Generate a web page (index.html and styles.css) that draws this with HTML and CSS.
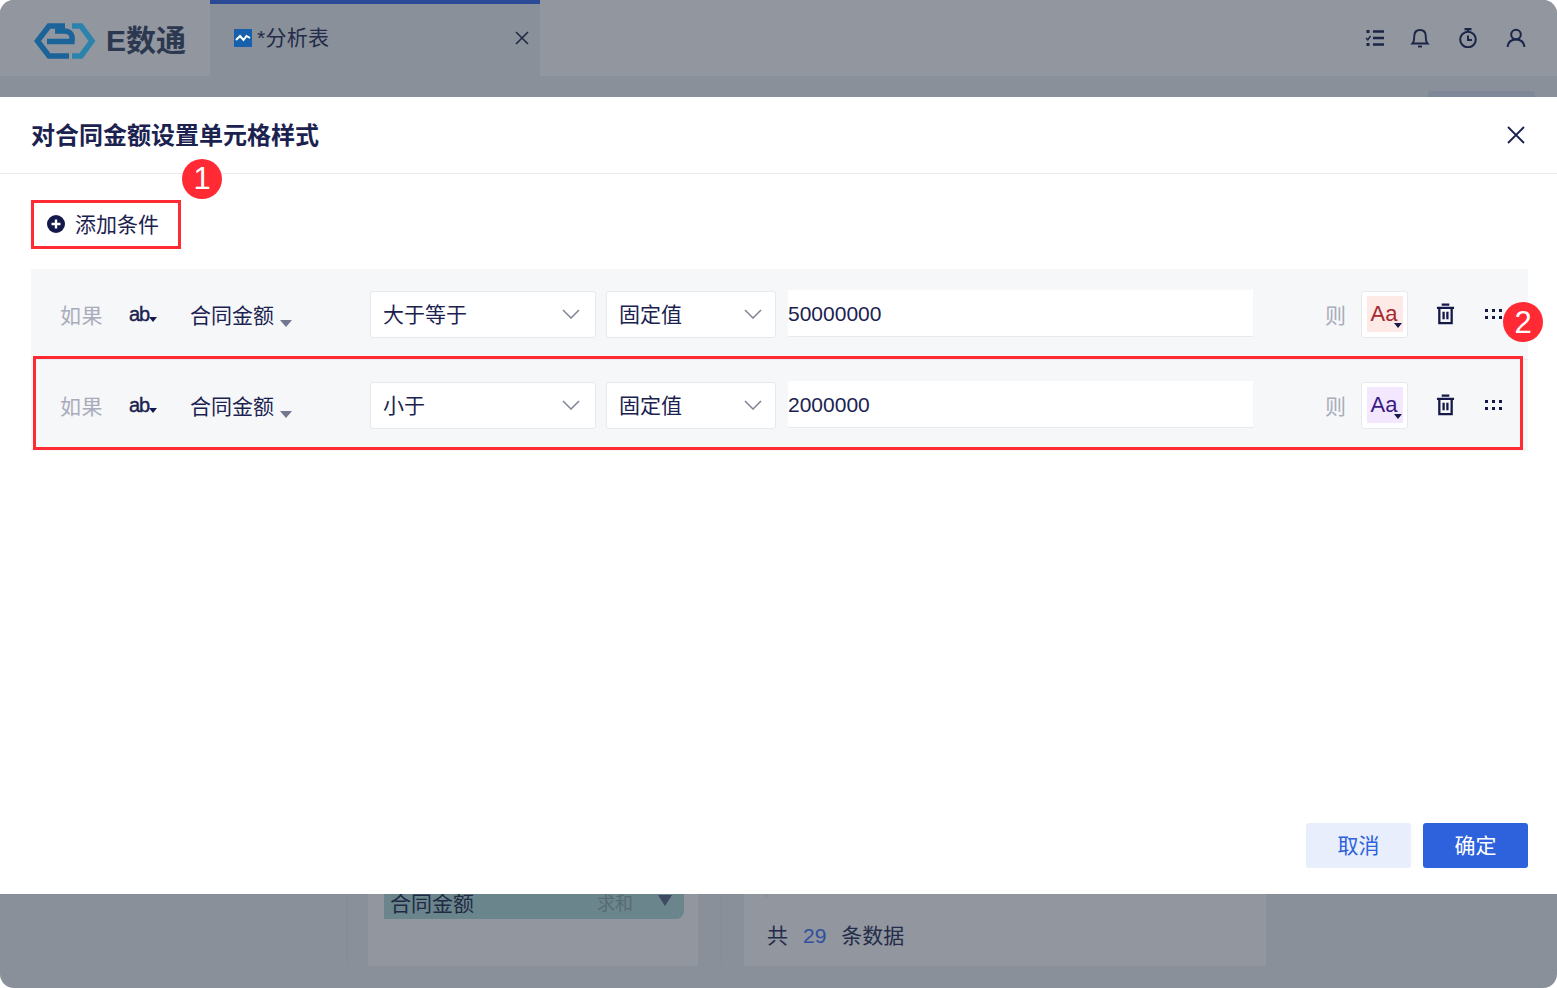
FILE: index.html
```html
<!DOCTYPE html>
<html lang="zh">
<head>
  <meta charset="UTF-8">
  <title>E数通</title>
  <link rel="stylesheet" href="styles.css">
</head>
<body>
<div class="app">

  <header class="topbar">
    <div class="brand">
      <svg class="logo" viewBox="0 0 62 36" fill="none" stroke-width="5.500">
        <path d="M31 3H15L3.500 18 15 33H35" stroke="#1b6499"/>
        <path d="M13 18.500H38C39 10 35 8 30 8H21" stroke="#1b6499"/>
        <path d="M38 3H47L58 18 47 33H38" stroke="#2a83ad"/>
      </svg>
      <span class="brand-name">E数通</span>
    </div>
    <div class="tab">
      <svg class="tab-icon" viewBox="0 0 18 18">
        <rect width="18" height="18" fill="#1660ad"/>
        <path d="M2 11L6 7 9.500 11 12.500 7 16 9" fill="none" stroke="#fff" stroke-width="2"/>
      </svg>
      <span class="tab-title">*分析表</span>
      <svg class="tab-close" viewBox="0 0 14 14"><path d="M1 1L13 13M13 1L1 13" stroke="#1f2a44" stroke-width="1.600"/></svg>
    </div>
    <div class="tools">
      <svg class="tool-list" viewBox="0 0 20 20" fill="none" stroke="#1b2548" stroke-width="2.400">
        <path d="M8 3.500H19M8 10H19M8 16.500H19"/>
        <path d="M1.500 3.500H4.500M1.500 16.500H4.500" stroke-width="2.800"/>
        <path d="M1 10L2.800 11.800 5.500 8" stroke-width="1.400"/>
      </svg>
      <svg viewBox="0 0 20 20" fill="none" stroke="#1b2548" stroke-width="1.900">
        <path d="M2.500 15.500C4 14 4.200 12.500 4.200 8.500C4.200 4.500 6.500 2 10 2S15.800 4.500 15.800 8.500C15.800 12.500 16 14 17.500 15.500Z"/>
        <path d="M8 18.500H12"/>
      </svg>
      <svg viewBox="0 0 20 20" fill="none" stroke="#1b2548" stroke-width="2">
        <circle cx="10" cy="11.500" r="7.800"/>
        <path d="M6.500 1.200H13.500M10 1.200V3.500" stroke-width="2.200"/>
        <path d="M10 7.500V12H14"/>
      </svg>
      <svg viewBox="0 0 20 20" fill="none" stroke="#1b2548" stroke-width="2">
        <circle cx="10" cy="6.500" r="4.800"/>
        <path d="M1.500 19C2 14.500 5 11.500 10 11.500S18 14.500 18.500 19"/>
      </svg>
    </div>
  </header>

  <div class="subbar"><span class="subbar-btn"></span></div>

  <section class="dialog">
    <div class="dialog-head">
      <h2>对合同金额设置单元格样式</h2>
      <svg class="dialog-close" viewBox="0 0 18 18"><path d="M1 1L17 17M17 1L1 17" stroke="#1b2250" stroke-width="1.800"/></svg>
    </div>

    <div class="dialog-body">
      <button class="add-btn">
        <svg viewBox="0 0 18 18">
          <circle cx="9" cy="9" r="9" fill="#14194a"/>
          <path d="M9 4.500V13.500M4.500 9H13.500" stroke="#fff" stroke-width="2.400"/>
        </svg>
        添加条件
      </button>

      <div class="rules">
        <div class="rule">
          <span class="rule-if">如果</span>
          <span class="rule-type">ab<i class="caret caret-sm"></i></span>
          <span class="rule-field">合同金额<i class="caret caret-md"></i></span>
          <div class="select select-op">大于等于
            <svg viewBox="0 0 18 10"><path d="M1 1L9 9 17 1" fill="none" stroke="#7f8296" stroke-width="1.500"/></svg>
          </div>
          <div class="select select-kind">固定值
            <svg viewBox="0 0 18 10"><path d="M1 1L9 9 17 1" fill="none" stroke="#7f8296" stroke-width="1.500"/></svg>
          </div>
          <div class="value">50000000</div>
          <span class="rule-then">则</span>
          <div class="style-btn"><span class="swatch swatch-red">Aa<i class="caret caret-sm"></i></span></div>
          <svg class="trash" viewBox="0 0 20 22" fill="none" stroke="#14194a" stroke-width="2.400">
            <path d="M1 4.500H19M6 1.200H14" />
            <path d="M3.500 4.500V20.500H16.500V4.500M8 8.500V16.500M12 8.500V16.500" />
          </svg>
          <svg class="grip" viewBox="0 0 18 10" fill="#14194a">
            <rect x="0" y="0" width="3" height="3"/><rect x="7" y="0" width="3" height="3"/><rect x="14" y="0" width="3" height="3"/>
            <rect x="0" y="7" width="3" height="3"/><rect x="7" y="7" width="3" height="3"/><rect x="14" y="7" width="3" height="3"/>
          </svg>
        </div>

        <div class="rule marked">
          <span class="rule-if">如果</span>
          <span class="rule-type">ab<i class="caret caret-sm"></i></span>
          <span class="rule-field">合同金额<i class="caret caret-md"></i></span>
          <div class="select select-op">小于
            <svg viewBox="0 0 18 10"><path d="M1 1L9 9 17 1" fill="none" stroke="#7f8296" stroke-width="1.500"/></svg>
          </div>
          <div class="select select-kind">固定值
            <svg viewBox="0 0 18 10"><path d="M1 1L9 9 17 1" fill="none" stroke="#7f8296" stroke-width="1.500"/></svg>
          </div>
          <div class="value">2000000</div>
          <span class="rule-then">则</span>
          <div class="style-btn"><span class="swatch swatch-purple">Aa<i class="caret caret-sm"></i></span></div>
          <svg class="trash" viewBox="0 0 20 22" fill="none" stroke="#14194a" stroke-width="2.400">
            <path d="M1 4.500H19M6 1.200H14" />
            <path d="M3.500 4.500V20.500H16.500V4.500M8 8.500V16.500M12 8.500V16.500" />
          </svg>
          <svg class="grip" viewBox="0 0 18 10" fill="#14194a">
            <rect x="0" y="0" width="3" height="3"/><rect x="7" y="0" width="3" height="3"/><rect x="14" y="0" width="3" height="3"/>
            <rect x="0" y="7" width="3" height="3"/><rect x="7" y="7" width="3" height="3"/><rect x="14" y="7" width="3" height="3"/>
          </svg>
        </div>
      </div>
    </div>

    <div class="dialog-foot">
      <button class="btn btn-cancel">取消</button>
      <button class="btn btn-ok">确定</button>
    </div>

    <span class="badge badge-one">1</span>
    <span class="badge badge-two">2</span>
  </section>

  <footer class="behind">
    <div class="behind-left">
      <div class="behind-fields">
        <div class="chip">
          <span>合同金额</span>
          <span class="chip-sum">求和</span>
          <i class="chip-caret"></i>
        </div>
      </div>
    </div>
    <div class="behind-table">共<b>29</b>条数据</div>
  </footer>

</div>
</body>
</html>
```

FILE: styles.css
```css
html, body {
  margin: 0;
  height: 100%;
  background: #fff;
}

body {
  font-family: "Liberation Sans", "Noto Sans CJK SC", sans-serif;
  font-size: 21px;
  color: #1b2250;
  overflow: hidden;
}

.app {
  height: 988px;
  display: flex;
  flex-direction: column;
  background: #8a9099;
  border-radius: 14px;
  overflow: hidden;
}

/* top bar behind the mask */
.topbar {
  height: 76px;
  flex: none;
  display: flex;
  background: #92969f;
}

.brand {
  width: 210px;
  display: flex;
  align-items: center;
  padding: 6px 0 0 34px;
  box-sizing: border-box;
}

.logo {
  width: 62px;
  height: 36px;
}

.brand-name {
  margin: -6px 0 0 10px;
  font-size: 30px;
  font-weight: bold;
  color: #2b384f;
}

.tab {
  width: 330px;
  box-sizing: border-box;
  border-top: 4px solid #2b4a96;
  background: #8a9099;
  display: flex;
  align-items: center;
  padding: 0 11px 4px 24px;
}

.tab-icon {
  width: 18px;
  height: 18px;
}

.tab-title {
  margin: 0 0 4px 5px;
  font-size: 21px;
  letter-spacing: 0.3px;
  color: #232c49;
  flex: 1;
}

.tab-close {
  width: 14px;
  height: 14px;
}

.tools {
  margin-left: auto;
  display: flex;
  align-items: center;
  gap: 28px;
  padding-right: 31px;
}

.tools svg {
  width: 20px;
  height: 20px;
}

.tools .tool-list {
  margin-right: -3px;
}

.subbar {
  height: 21px;
  flex: none;
  display: flex;
  justify-content: flex-end;
  align-items: flex-end;
  padding-right: 22px;
}

.subbar-btn {
  width: 107px;
  height: 6px;
  background: #7f8899;
  border-radius: 3px 3px 0 0;
}

/* dialog */
.dialog {
  position: relative;
  height: 797px;
  flex: none;
  background: #fff;
  display: flex;
  flex-direction: column;
}

.dialog-head {
  height: 76px;
  flex: none;
  border-bottom: 1px solid #e8e9ed;
  display: flex;
  align-items: center;
  justify-content: space-between;
  padding: 0 32px 0 31px;
}

.dialog-head h2 {
  margin: 0 0 4px;
  font-size: 24px;
  font-weight: bold;
}

.dialog-close {
  width: 18px;
  height: 18px;
}

.dialog-body {
  padding: 26px 29px 0 31px;
  flex: 1;
}

.add-btn {
  width: 150px;
  height: 49px;
  box-sizing: border-box;
  border: 3px solid #ff2a33;
  background: #fff;
  color: inherit;
  font: inherit;
  display: flex;
  align-items: center;
  gap: 10px;
  padding: 0 0 4px 13px;
}

.add-btn svg {
  width: 18px;
  height: 18px;
  margin-top: 2px;
}

.rules {
  margin-top: 20px;
}

.rule {
  position: relative;
  height: 91px;
  box-sizing: border-box;
  padding: 22px 0 22px 29px;
  background: #f6f7f9;
  border-bottom: 1px solid #e8e9ee;
  display: flex;
  align-items: flex-start;
}

.rule.marked {
  border-bottom: none;
}

.rule.marked::after {
  content: "";
  position: absolute;
  left: 2px;
  right: 5px;
  top: -4px;
  bottom: 1px;
  border: 3px solid #ff2a33;
  pointer-events: none;
}

.rule-if,
.rule-then {
  color: #a9acba;
  line-height: 49px;
}

.rule-if {
  width: 69px;
  letter-spacing: 0.5px;
}

.rule-type {
  position: relative;
  width: 61px;
  line-height: 46px;
  font-size: 20px;
  letter-spacing: -1px;
  -webkit-text-stroke: 0.4px #1b2250;
}

.rule-type .caret {
  position: absolute;
  left: 20px;
  top: 26px;
  -webkit-text-stroke: 0;
}

.rule-field {
  width: 180px;
  line-height: 50px;
}

.caret {
  display: inline-block;
  width: 0;
  height: 0;
  border-style: solid;
  border-color: #14194a transparent transparent;
}

.caret-sm {
  border-width: 5px 4px 0;
}

.caret-md {
  border-width: 7px 6px 0;
  border-top-color: #72768f;
  margin-left: 6px;
  vertical-align: -4px;
}

.select {
  height: 47px;
  box-sizing: border-box;
  background: #fff;
  border: 1px solid #e8e9ee;
  border-radius: 3px;
  display: flex;
  align-items: center;
  justify-content: space-between;
  padding: 0 15px 4px 12px;
}

.select svg {
  width: 18px;
  height: 10px;
  margin-top: 2px;
}

.select-op {
  width: 226px;
  margin-right: 10px;
}

.select-kind {
  width: 170px;
  margin-right: 12px;
  padding-right: 13px;
}

.value {
  width: 465px;
  height: 47px;
  margin-top: -1px;
  box-sizing: border-box;
  background: #fff;
  border-bottom: 1px solid #e8e9ee;
  line-height: 47px;
}

.rule-then {
  margin-left: 72px;
  width: 36px;
}

.style-btn {
  width: 47px;
  height: 47px;
  box-sizing: border-box;
  background: #fff;
  border: 1px solid #e8e9ee;
  border-radius: 3px;
  padding: 4px 5px;
}

.swatch {
  position: relative;
  display: block;
  width: 36px;
  height: 36px;
  padding-right: 2px;
  box-sizing: border-box;
  line-height: 36px;
  text-align: center;
  font-size: 22px;
}

.swatch .caret {
  position: absolute;
  right: 1px;
  top: 27px;
}

.swatch-red {
  background: #fde9e6;
  color: #a5272f;
}

.swatch-purple {
  background: #f2e7fc;
  color: #3b1a85;
}

.trash {
  width: 19px;
  height: 22px;
  margin: 12px 0 0 28px;
}

.grip {
  width: 18px;
  height: 10px;
  margin: 18px 0 0 30px;
}

.dialog-foot {
  display: flex;
  justify-content: flex-end;
  gap: 12px;
  padding: 0 29px 26px 0;
}

.btn {
  width: 105px;
  height: 45px;
  border: none;
  border-radius: 3px;
  padding: 0 0 4px;
  font: inherit;
}

.btn-cancel {
  background: #e8eefb;
  color: #2d62dc;
}

.btn-ok {
  background: #2d62dc;
  color: #fff;
}

.badge {
  position: absolute;
  width: 40px;
  height: 40px;
  border-radius: 50%;
  background: #ff2a33;
  color: #fff;
  font-size: 31px;
  line-height: 40px;
  text-align: center;
}

.badge-one {
  left: 182px;
  top: 62px;
}

.badge-two {
  left: 1503px;
  top: 205px;
  line-height: 42px;
}

/* page content peeking out under the dialog */
.behind {
  flex: 1;
  display: flex;
  padding: 0 291px 22px 347px;
}

.behind-left {
  width: 375px;
  flex: none;
  box-sizing: border-box;
  padding-left: 20px;
  border-left: 1px solid #848b94;
  border-right: 1px solid #848b94;
}

.behind-fields {
  width: 330px;
  height: 100%;
  box-sizing: border-box;
  padding-left: 16px;
  background: #92969f;
}

.chip {
  width: 300px;
  height: 25px;
  box-sizing: border-box;
  padding: 0 12px 10px 6px;
  background: #6b858c;
  border-radius: 0 0 8px 0;
  display: flex;
  align-items: center;
  color: #1f2a44;
}

.chip-sum {
  margin-left: auto;
  font-size: 18px;
  color: #566b75;
}

.chip-caret {
  align-self: flex-start;
  margin: 1px 0 0 25px;
  width: 0;
  height: 0;
  border-style: solid;
  border-width: 11px 7px 0;
  border-color: #3d4a62 transparent transparent;
}

.behind-table {
  position: relative;
  flex: 1;
  margin-left: 22px;
  background: #92969f;
  padding: 26px 0 0 23px;
  line-height: 32px;
  color: #232c49;
}

.behind-table::before {
  content: "";
  position: absolute;
  left: 22px;
  top: 0;
  height: 4px;
  border-left: 1px solid #848b94;
}

.behind-table b {
  font-weight: normal;
  color: #2f4f9e;
  margin: 0 15px;
}
```
